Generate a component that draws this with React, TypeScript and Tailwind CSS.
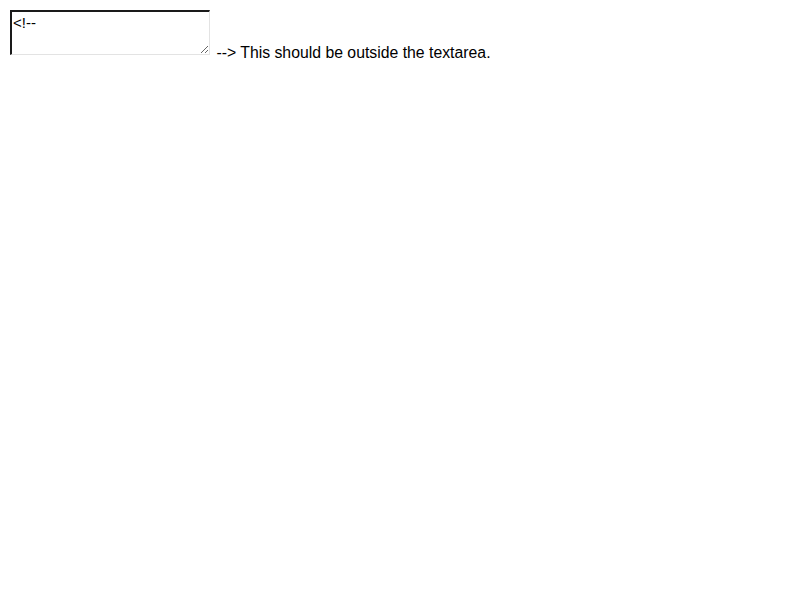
import React from 'react';

export default function App() {
  return (
    <div className="min-h-[600px] w-[800px] bg-white p-2 font-['Liberation_Sans',Arial,sans-serif] text-[15.8px] leading-[18px] text-black">
      <textarea
        defaultValue="<!--"
        className="m-[2px] mb-[3px] box-border h-[45px] w-[200px] resize border-t-2 border-r border-b border-l-2 border-t-[#1a1a1a] border-r-[#e3e3e3] border-b-[#e3e3e3] border-l-[#1a1a1a] bg-white p-0 pt-[2px] pl-[1px] align-baseline font-['Liberation_Sans',Arial,sans-serif] text-[15px] leading-[17px] text-black outline-none"
      />{' '}
      --&gt; This should be outside the textarea.
    </div>
  );
}
